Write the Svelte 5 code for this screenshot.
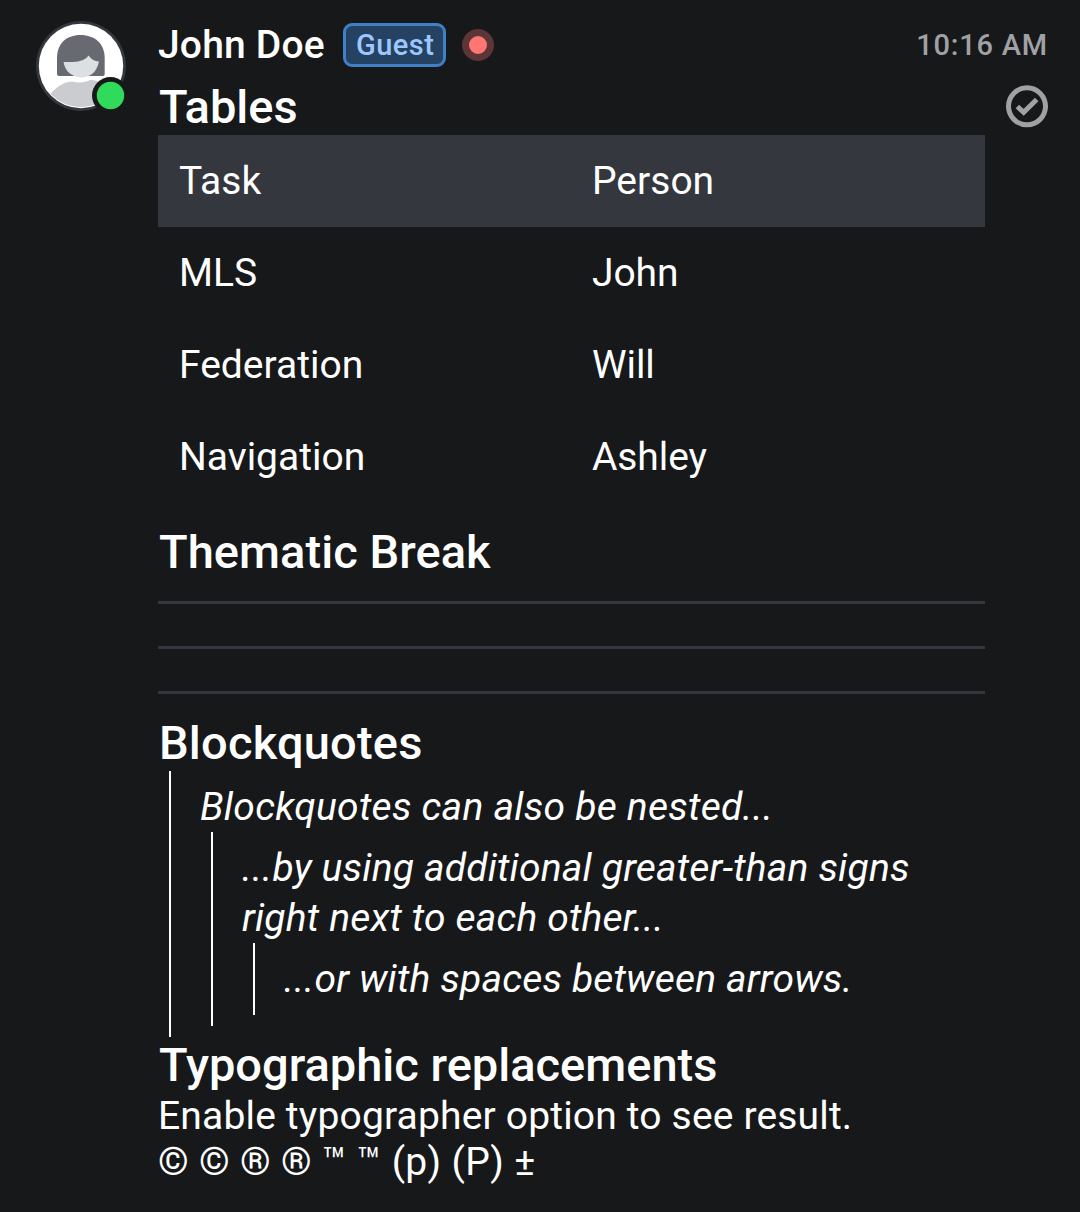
<script>
  const rows = [
    ['MLS', 'John'],
    ['Federation', 'Will'],
    ['Navigation', 'Ashley'],
  ];
</script>

<article class="message">
  <div class="avatar">
    <svg width="94" height="94" viewBox="0 0 94 94">
      <defs><clipPath id="face"><circle cx="46" cy="45" r="41.200" /></clipPath></defs>
      <circle cx="46" cy="45" r="45" fill="#34373d" />
      <circle cx="46" cy="45" r="42.200" fill="#fff" />
      <path clip-path="url(#face)" d="M10 80C18 68 27 61 37 60.500C43 62 49 62 56 58.800C66 60 76 66 80 80V94H10Z" fill="#caccd0" />
      <path d="M22 53V37C22 23 31 14 45.500 14S69.700 23 69.700 37V53Q69.700 55 67.700 55H24Q22 55 22 53Z" fill="#676b71" />
      <path d="M28.500 41H38Q49 41 53.700 34.500Q57 40 63.900 40.500Q61 56 46 56.500Q31 55 28.500 41Z" fill="#dce0e3" />
      <circle cx="75.500" cy="74.500" r="18.500" fill="#17181a" />
      <circle cx="75.500" cy="74.500" r="13.700" fill="#30db5b" />
    </svg>
  </div>
  <div class="body">
    <header>
      <span class="name">John Doe</span>
      <span class="badge">Guest</span>
      <span class="dot"></span>
      <time>10:16 AM</time>
    </header>
    <div class="content">
      <h2 class="tables">Tables</h2>
      <table>
        <thead><tr><th>Task</th><th>Person</th></tr></thead>
        <tbody>
          {#each rows as [task, person]}
            <tr><td>{task}</td><td>{person}</td></tr>
          {/each}
        </tbody>
      </table>
      <h2 class="break">Thematic Break</h2>
      <hr /><hr /><hr />
      <h2 class="quotes">Blockquotes</h2>
      <blockquote class="outer">
        <p>Blockquotes can also be nested...</p>
        <blockquote>
          <p>...by using additional greater-than signs right next to each other...</p>
          <blockquote><p>...or with spaces between arrows.</p></blockquote>
        </blockquote>
      </blockquote>
      <h2 class="typo">Typographic replacements</h2>
      <p class="plain">Enable typographer option to see result.</p>
      <p class="plain symbols">© © ® ® ™ ™ (p) (P) ±</p>
    </div>
    <svg class="sent" width="44" height="44" viewBox="0 0 44 44" fill="none" stroke="#a0a1a5">
      <circle cx="22" cy="22.300" r="18.500" stroke-width="5" />
      <path d="M12.300 22.500L18.700 28.300L31.700 15.500" stroke-width="5" />
    </svg>
  </div>
</article>

<style>
  :global(body) { background: #17181a; }
  .message {
    box-sizing: border-box;
    width: 1080px;
    height: 1212px;
    padding: 21px 31px 0 35px;
    display: flex;
    font: 39px/46px Roboto, sans-serif;
    color: #fff;
    background: #17181a;
    overflow: hidden;
  }
  .avatar { width: 123px; flex: none; }
  .avatar svg { display: block; }
  .body {
    width: 891px;
    display: grid;
    grid-template-columns: 827px 1fr;
    align-content: start;
  }
  header { grid-column: 1 / 3; height: 62px; display: flex; align-items: flex-start; }
  .name { font-weight: 500; font-size: 39px; line-height: 48px; letter-spacing: 0.2px; }
  .badge {
    box-sizing: border-box;
    margin: 2px 0 0 18px;
    padding-left: 1.500px;
    height: 44px;
    width: 103px;
    border: 3px solid #4080c8;
    border-radius: 9px;
    background: #254263;
    color: #9cc8ff;
    font-weight: 500;
    font-size: 29px;
    line-height: 39px;
    letter-spacing: 0.5px;
    text-align: center;
  }
  .dot {
    box-sizing: border-box;
    margin: 8px 0 0 16px;
    width: 32px;
    height: 32px;
    border: 7px solid #5c3536;
    border-radius: 50%;
    background: #ff7770;
  }
  time { margin: 0 1px 0 auto; color: #a0a1a5; font-weight: 500; font-size: 29px; line-height: 48px; letter-spacing: 0.8px; }
  .sent { display: block; justify-self: end; margin-top: 1px; }
  h2 { margin: 0; padding-left: 1px; font-weight: 500; font-size: 47px; line-height: 52px; }
  .tables { line-height: 48px; padding-bottom: 4px; }
  table { width: 827px; border-collapse: collapse; table-layout: fixed; }
  tr { height: 92px; }
  th, td { padding: 0 21px; text-align: left; font-weight: 400; line-height: 46px; }
  th:last-child, td:last-child { padding-left: 20.500px; }
  td:last-child { letter-spacing: -0.1px; }
  thead { background: #34373d; }
  .break { margin-top: 23px; letter-spacing: 0.05px; }
  hr { height: 3px; margin: 0 0 42px; border: 0; background: #34373d; }
  .break + hr { margin-top: 23px; }
  .quotes { margin-top: -19px; padding-bottom: 2px; letter-spacing: 0.2px; }
  blockquote {
    margin: 0 0 0 11px;
    border-left: 2px solid #fff;
    padding: 11px 0 11px 29px;
    font-style: italic;
    letter-spacing: 0.18px;
  }
  p { margin: 0; }
  blockquote p { line-height: 50px; }
  .outer > p { letter-spacing: 0.26px; }
  .typo { padding: 2px 0 2px 1px; }
  .plain { line-height: 46px; letter-spacing: 0.17px; }
  .symbols { letter-spacing: 0.35px; }
</style>
